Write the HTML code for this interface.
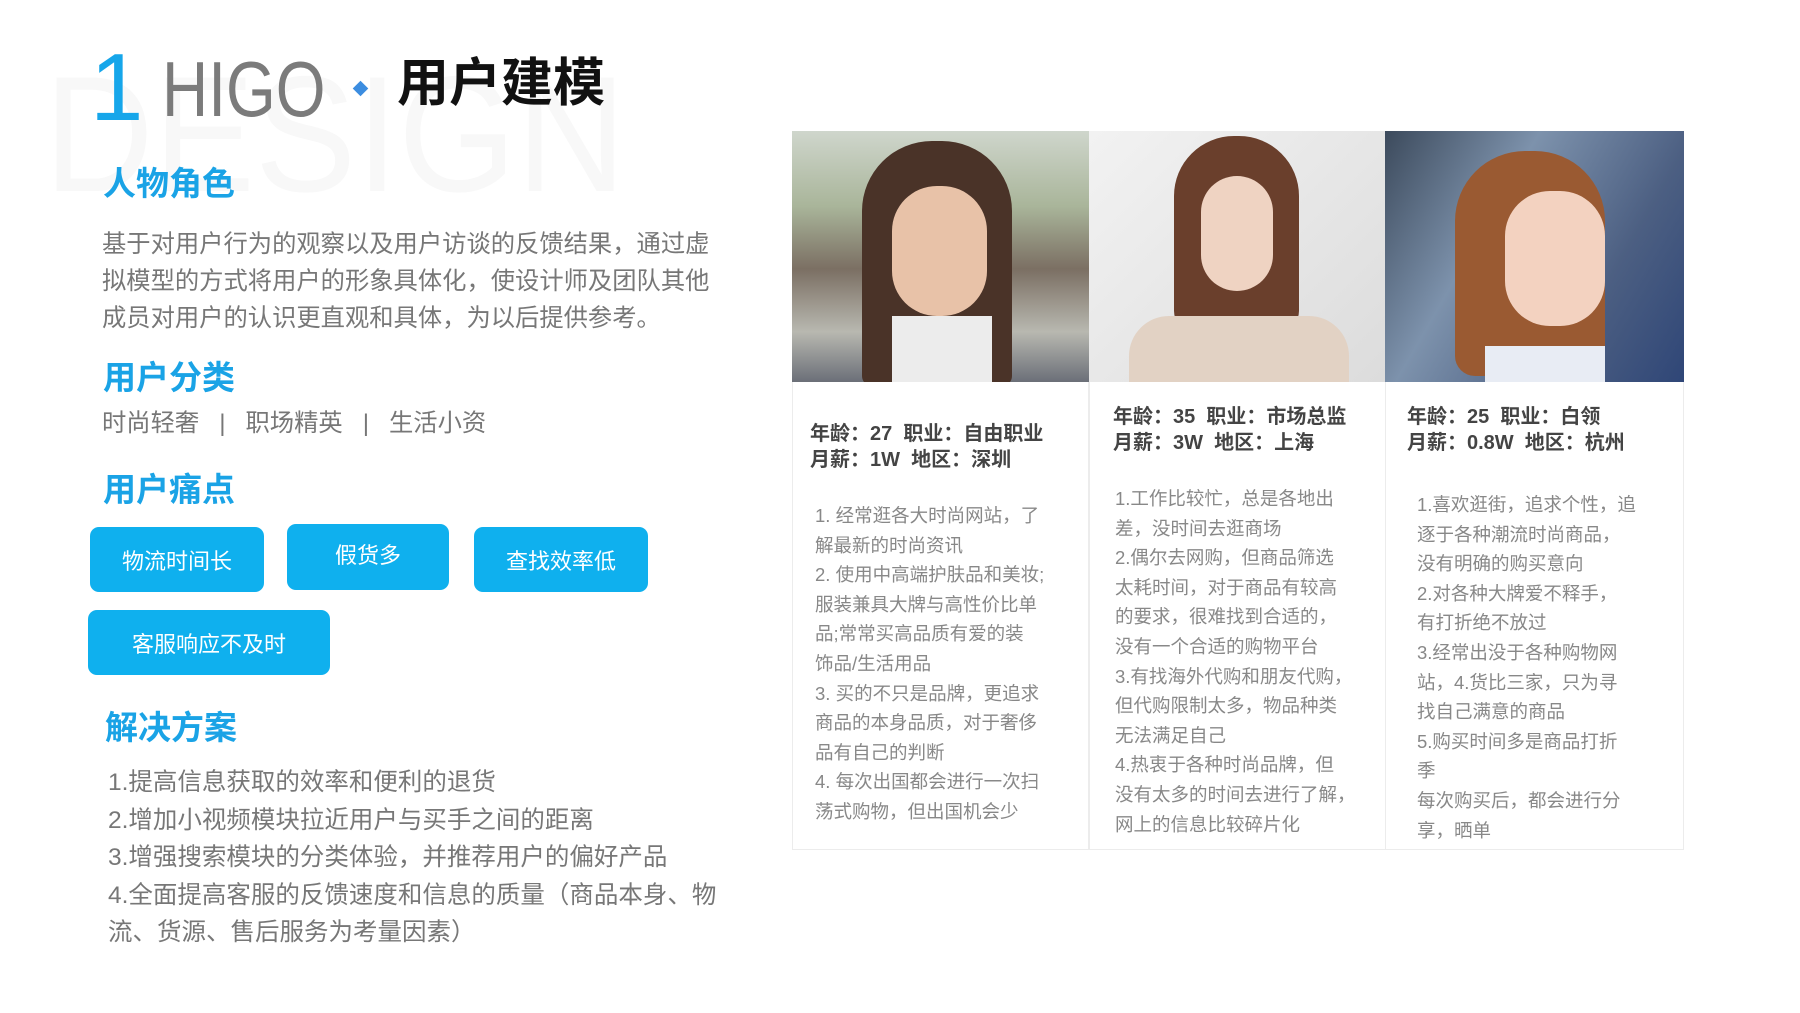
<!DOCTYPE html>
<html><head><meta charset="utf-8"><style>
*{margin:0;padding:0;box-sizing:border-box}
body{width:1800px;height:1013px;background:#fff;position:relative;overflow:hidden;font-family:"Liberation Sans","Noto Sans CJK SC",sans-serif}
.a{position:absolute;white-space:nowrap}
.h{color:#1aa3e6;font-size:33px;font-weight:bold;line-height:1}
.t{color:#777;font-size:24.3px;line-height:37px}
.btn{position:absolute;background:#0fb0ee;border-radius:9px;color:#fff;font-size:22px;display:flex;align-items:center;justify-content:center}
.col{position:absolute;top:382px;height:468px;width:297px;border:1px solid #ececec;border-top:none;background:#fff}
.hd{position:absolute;font-size:20px;font-weight:bold;color:#444;line-height:26px;white-space:nowrap}
.bd{position:absolute;font-size:18.5px;color:#888;line-height:29.6px;white-space:nowrap}
.ph{position:absolute;top:131px;height:251px;overflow:hidden}
.sep{display:inline-block;margin:0 20px}
</style></head><body>
<div class="a" style="left:44px;top:52px;font-size:165px;color:#f8f8f8;line-height:1;transform:scaleX(0.92);transform-origin:left">DESIGN</div>
<div class="a" style="left:90px;top:40px;font-size:96px;color:#16a6ea;line-height:1">1</div>
<div class="a" style="left:162px;top:50px;font-size:78px;color:#7b7b7b;line-height:1;transform:scaleX(0.82);transform-origin:left">HIGO</div>
<div class="a" style="left:355px;top:83px;width:11px;height:11px;background:#3c8de0;transform:rotate(45deg)"></div>
<div class="a" style="left:397px;top:58px;font-size:52px;color:#111;font-weight:bold;line-height:1">用户建模</div>

<div class="a h" style="left:103px;top:167px">人物角色</div>
<div class="a t" style="left:102px;top:226px">基于对用户行为的观察以及用户访谈的反馈结果，通过虚<br>拟模型的方式将用户的形象具体化，使设计师及团队其他<br>成员对用户的认识更直观和具体，为以后提供参考。</div>
<div class="a h" style="left:103px;top:361px">用户分类</div>
<div class="a t" style="left:102px;top:405px">时尚轻奢<span class="sep">|</span>职场精英<span class="sep">|</span>生活小资</div>
<div class="a h" style="left:103px;top:473px">用户痛点</div>
<div class="btn" style="left:90px;top:527px;width:174px;height:65px">物流时间长</div>
<div class="btn" style="left:287px;top:524px;width:162px;height:66px;padding-bottom:6px">假货多</div>
<div class="btn" style="left:474px;top:527px;width:174px;height:65px">查找效率低</div>
<div class="btn" style="left:88px;top:610px;width:242px;height:65px">客服响应不及时</div>
<div class="a h" style="left:105px;top:711px">解决方案</div>
<div class="a t" style="left:108px;top:764px;font-size:24.5px;line-height:37.5px">1.提高信息获取的效率和便利的退货<br>2.增加小视频模块拉近用户与买手之间的距离<br>3.增强搜索模块的分类体验，并推荐用户的偏好产品<br>4.全面提高客服的反馈速度和信息的质量（商品本身、物<br>流、货源、售后服务为考量因素）</div>

<div class="ph" style="left:792px;width:297px;background:linear-gradient(180deg,#cfd6cc 0%,#a9b59a 30%,#7b6f63 55%,#b8b8b0 80%,#6b6f78 100%)">
 <div class="a" style="left:70px;top:10px;width:150px;height:245px;border-radius:70px 70px 10px 10px;background:#4a3328"></div>
 <div class="a" style="left:100px;top:55px;width:95px;height:130px;border-radius:45px;background:#e8c2a8"></div>
 <div class="a" style="left:100px;top:185px;width:100px;height:66px;background:#ececec"></div>
</div>
<div class="ph" style="left:1089px;width:296px;background:linear-gradient(135deg,#f2f2f2,#dcdcdc)">
 <div class="a" style="left:85px;top:5px;width:125px;height:195px;border-radius:60px 60px 20px 20px;background:#6a3f2c"></div>
 <div class="a" style="left:112px;top:45px;width:72px;height:115px;border-radius:36px;background:#efd3c2"></div>
 <div class="a" style="left:40px;top:185px;width:220px;height:70px;border-radius:40px 40px 0 0;background:#e2d2c4"></div>
</div>
<div class="ph" style="left:1385px;width:299px;background:linear-gradient(120deg,#3c4a5c 0%,#7d92ac 35%,#4c5f82 70%,#2f4677 100%)">
 <div class="a" style="left:70px;top:20px;width:150px;height:225px;border-radius:70px 70px 20px 20px;background:#9a5a32"></div>
 <div class="a" style="left:120px;top:60px;width:100px;height:135px;border-radius:45px;background:#f3d2c0"></div>
 <div class="a" style="left:100px;top:215px;width:120px;height:40px;background:#e8ecf4"></div>
</div>

<div class="col" style="left:792px"></div>
<div class="col" style="left:1089px"></div>
<div class="col" style="left:1385px;width:299px"></div>
<div class="hd" style="left:810px;top:421px">年龄：27&nbsp; 职业：自由职业<br>月薪：1W&nbsp; 地区：深圳</div>
<div class="hd" style="left:1113px;top:404px">年龄：35&nbsp; 职业：市场总监<br>月薪：3W&nbsp; 地区：上海</div>
<div class="hd" style="left:1407px;top:404px">年龄：25&nbsp; 职业：白领<br>月薪：0.8W&nbsp; 地区：杭州</div>
<div class="bd" style="left:815px;top:501px">1. 经常逛各大时尚网站，了<br>解最新的时尚资讯<br>2. 使用中高端护肤品和美妆;<br>服装兼具大牌与高性价比单<br>品;常常买高品质有爱的装<br>饰品/生活用品<br>3. 买的不只是品牌，更追求<br>商品的本身品质，对于奢侈<br>品有自己的判断<br>4. 每次出国都会进行一次扫<br>荡式购物，但出国机会少</div>
<div class="bd" style="left:1115px;top:484px">1.工作比较忙，总是各地出<br>差，没时间去逛商场<br>2.偶尔去网购，但商品筛选<br>太耗时间，对于商品有较高<br>的要求，很难找到合适的，<br>没有一个合适的购物平台<br>3.有找海外代购和朋友代购，<br>但代购限制太多，物品种类<br>无法满足自己<br>4.热衷于各种时尚品牌，但<br>没有太多的时间去进行了解，<br>网上的信息比较碎片化</div>
<div class="bd" style="left:1417px;top:490px">1.喜欢逛街，追求个性，追<br>逐于各种潮流时尚商品，<br>没有明确的购买意向<br>2.对各种大牌爱不释手，<br>有打折绝不放过<br>3.经常出没于各种购物网<br>站，4.货比三家，只为寻<br>找自己满意的商品<br>5.购买时间多是商品打折<br>季<br>每次购买后，都会进行分<br>享，晒单</div>
</body></html>
